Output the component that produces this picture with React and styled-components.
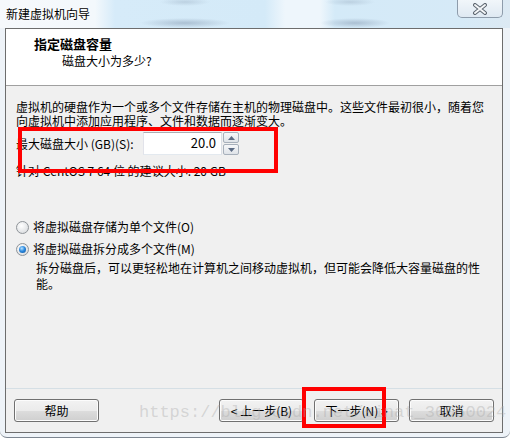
import styled, { createGlobalStyle } from 'styled-components';

const GlobalStyle = createGlobalStyle`
  html, body {
    margin: 0;
    padding: 0;
    background: #ffffff;
  }
  body {
    font-family: "Noto Sans CJK SC", "Liberation Sans", sans-serif;
    font-size: 12px;
    color: #000;
  }
`;

const Window = styled.div`
  position: relative;
  width: 510px;
  height: 438px;
  display: flex;
  flex-direction: column;
  box-sizing: border-box;
  background: #eef3f8;
  border-radius: 0 0 7px 7px;
  border-bottom: 1px solid #7c8590;
  overflow: hidden;
`;

const TitleBar = styled.div`
  height: 28px;
  flex: none;
  display: flex;
  align-items: flex-start;
  justify-content: space-between;
  padding: 0 7px 0 6px;
  box-sizing: border-box;
  background:
    radial-gradient(ellipse 45px 5px at 185px 23px, rgba(120, 140, 165, 0.45), transparent),
    radial-gradient(ellipse 35px 5px at 355px 23px, rgba(120, 140, 165, 0.45), transparent),
    radial-gradient(ellipse 25px 4px at 185px 2px, rgba(150, 170, 190, 0.4), transparent),
    radial-gradient(ellipse 25px 4px at 350px 2px, rgba(150, 170, 190, 0.4), transparent),
    linear-gradient(90deg, #f6f9fc 0px, #f3f8fc 95px, #d6ebf9 115px, #d4eaf8 265px,
      #eef6fc 285px, #eef6fc 320px, #d4eaf8 335px, #d6eaf7 460px, #dce9f3 510px);
`;

const Title = styled.div`
  margin-top: 6px;
  font-size: 12px;
  line-height: 16px;
  color: #000;
  text-shadow: 0 0 6px #fff, 0 0 3px #fff;
`;

const CloseButton = styled.div`
  width: 46px;
  height: 18px;
  box-sizing: border-box;
  border: 1px solid #8e9cab;
  border-top: none;
  border-radius: 0 0 5px 5px;
  background: linear-gradient(#f1f6fa, #dfe9f2);
  display: flex;
  align-items: center;
  justify-content: center;
`;

const Panel = styled.div`
  flex: 1;
  margin: 0 7px 4px 5px;
  border: 1px solid #6d6d6d;
  background: #f0f0f0;
  display: flex;
  flex-direction: column;
`;

const Header = styled.div`
  height: 57px;
  flex: none;
  box-sizing: border-box;
  background: #ffffff;
  border-bottom: 1px solid #a0a0a0;
  padding: 6px 0 0 28px;
  line-height: 17px;
`;

const HeaderTitle = styled.div`
  font-weight: bold;
  font-size: 13px;
`;

const HeaderSub = styled.div`
  padding-left: 28px;
`;

const Body = styled.div`
  flex: 1;
  padding: 14px 0 0 10px;
`;

const Paragraph = styled.p`
  margin: 0;
  width: 472px;
  line-height: 14px;
`;

const SizeRow = styled.div`
  display: flex;
  align-items: center;
  margin-top: 4px;
  height: 23px;
`;

const SizeLabel = styled.label`
  width: 127px;
  flex: none;
`;

const NumberBox = styled.div`
  width: 79px;
  height: 23px;
  box-sizing: border-box;
  background: #fff;
  border: 1px solid #abadb3;
  border-left-color: #e2e3ea;
  border-right-color: #dbdfe6;
  border-bottom-color: #e3e9ef;
  text-align: right;
  padding: 0 5px;
  line-height: 20px;
  font-size: 13px;
`;

const Spinner = styled.div`
  width: 16px;
  height: 23px;
  margin-left: 1px;
  display: flex;
  flex-direction: column;
  gap: 1px;
`;

const SpinButton = styled.div`
  flex: 1;
  box-sizing: border-box;
  border: 1px solid #a7b0bb;
  border-radius: 2px;
  background: linear-gradient(#f6f7f9, #dfe3e8);
  display: flex;
  align-items: center;
  justify-content: center;
`;

const Hint = styled.div`
  margin-top: 9px;
  line-height: 14px;
`;

const Options = styled.div`
  margin-top: 42px;
  display: flex;
  flex-direction: column;
  gap: 8px;
`;

const Option = styled.div`
  display: flex;
  align-items: center;
  gap: 4px;
  height: 14px;
  line-height: 14px;
`;

const Radio = styled.span`
  width: 13px;
  height: 13px;
  box-sizing: border-box;
  border-radius: 50%;
  border: 1px solid #8f9499;
  background: radial-gradient(circle at 40% 35%, #ffffff 0%, #e4e6e8 60%, #cfd2d5 100%);
  display: flex;
  align-items: center;
  justify-content: center;

  &::after {
    content: '';
    width: 7px;
    height: 7px;
    border-radius: 50%;
    display: ${(p) => (p.$checked ? 'block' : 'none')};
    background: radial-gradient(circle at 40% 35%, #b9e3ff 0%, #2c8ae0 45%, #0b4f96 100%);
  }
`;

const Description = styled.p`
  margin: 4px 0 0 20px;
  width: 446px;
  line-height: 16px;
`;

const Footer = styled.div`
  height: 44px;
  flex: none;
  box-sizing: border-box;
  border-top: 1px solid #d5dfe5;
  padding: 10px 8px 0 8px;
  display: flex;
  align-items: flex-start;
  gap: 10px;
`;

const Button = styled.button`
  width: 85px;
  height: 23px;
  padding: 0;
  box-sizing: border-box;
  border: 1px solid #707070;
  border-radius: 3px;
  font-family: inherit;
  font-size: 12px;
  color: #000;
  background: linear-gradient(#f2f2f2 0%, #ebebeb 50%, #dddddd 51%, #cfcfcf 100%);
  box-shadow: inset 0 0 0 1px #fcfcfc;
  margin-left: ${(p) => (p.$push ? 'auto' : '0')};
`;

const Highlight = styled.div`
  position: absolute;
  box-sizing: border-box;
  border: 4px solid #ff0000;
  pointer-events: none;
`;

const Watermark = styled.div`
  position: absolute;
  left: 139px;
  top: 402px;
  font-family: "Liberation Mono", monospace;
  font-size: 17px;
  line-height: 22px;
  color: rgba(170, 170, 170, 0.4);
  pointer-events: none;
  white-space: nowrap;
`;

function CloseIcon() {
  return (
    <svg width="16" height="12" viewBox="0 0 16 12">
      <path d="M3 2 L13 10 M13 2 L3 10" stroke="#5d6670" strokeWidth="4" strokeLinecap="round" />
      <path d="M3 2 L13 10 M13 2 L3 10" stroke="#f4f6f8" strokeWidth="2" strokeLinecap="round" />
    </svg>
  );
}

function Arrow({ up }) {
  return (
    <svg width="7" height="4" viewBox="0 0 7 4">
      <path d={up ? 'M0 4 L3.5 0 L7 4 Z' : 'M0 0 L3.5 4 L7 0 Z'} fill="#5b6b84" />
    </svg>
  );
}

export default function App() {
  return (
    <>
      <GlobalStyle />
      <Window>
        <TitleBar>
          <Title>新建虚拟机向导</Title>
          <CloseButton>
            <CloseIcon />
          </CloseButton>
        </TitleBar>
        <Panel>
          <Header>
            <HeaderTitle>指定磁盘容量</HeaderTitle>
            <HeaderSub>磁盘大小为多少?</HeaderSub>
          </Header>
          <Body>
            <Paragraph>
              虚拟机的硬盘作为一个或多个文件存储在主机的物理磁盘中。这些文件最初很小，随着您向虚拟机中添加应用程序、文件和数据而逐渐变大。
            </Paragraph>
            <SizeRow>
              <SizeLabel>最大磁盘大小 (GB)(S):</SizeLabel>
              <NumberBox>20.0</NumberBox>
              <Spinner>
                <SpinButton>
                  <Arrow up />
                </SpinButton>
                <SpinButton>
                  <Arrow />
                </SpinButton>
              </Spinner>
            </SizeRow>
            <Hint>针对 CentOS 7 64 位 的建议大小: 20 GB</Hint>
            <Options>
              <Option>
                <Radio />
                <span>将虚拟磁盘存储为单个文件(O)</span>
              </Option>
              <Option>
                <Radio $checked />
                <span>将虚拟磁盘拆分成多个文件(M)</span>
              </Option>
            </Options>
            <Description>
              拆分磁盘后，可以更轻松地在计算机之间移动虚拟机，但可能会降低大容量磁盘的性能。
            </Description>
          </Body>
          <Footer>
            <Button>帮助</Button>
            <Button $push>&lt; 上一步(B)</Button>
            <Button>下一步(N) &gt;</Button>
            <Button>取消</Button>
          </Footer>
        </Panel>
        <Highlight style={{ left: 18, top: 127, width: 260, height: 46 }} />
        <Highlight style={{ left: 302, top: 387, width: 84, height: 41 }} />
        <Watermark>https://blog.csdn.net/sinat_36050024</Watermark>
      </Window>
    </>
  );
}
